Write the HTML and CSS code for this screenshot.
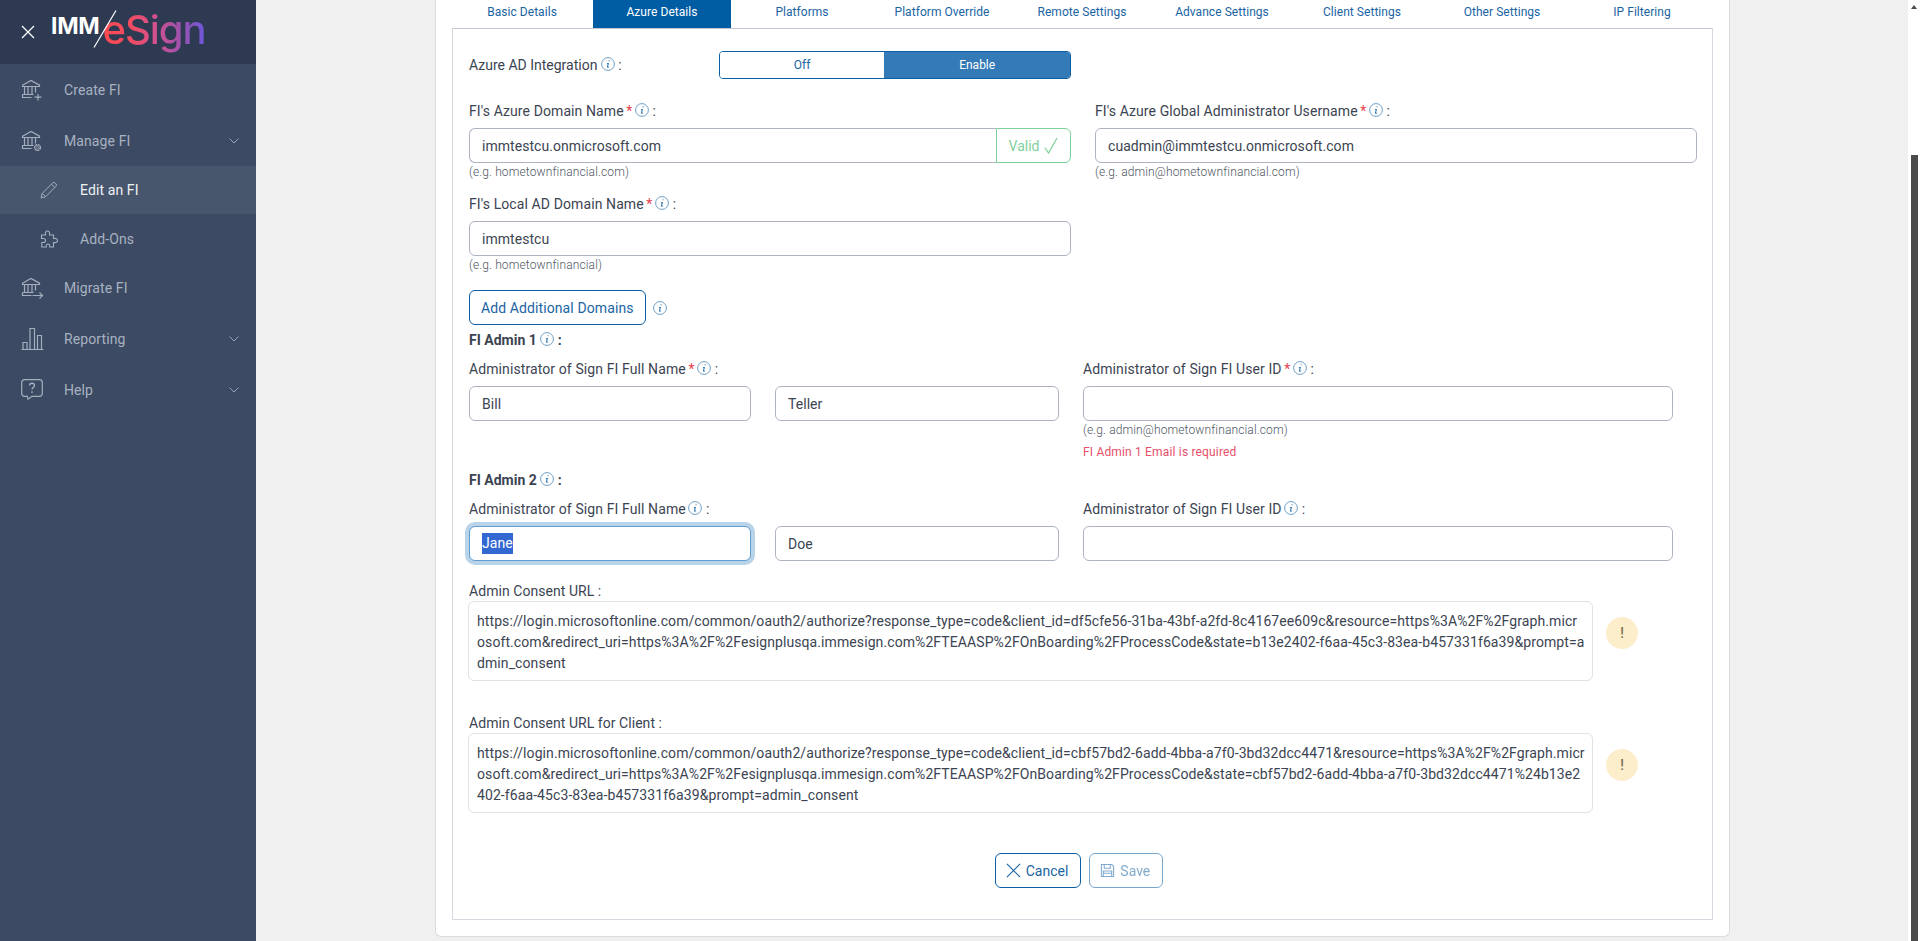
FILE: index.html
```html
<!DOCTYPE html>
<html>
<head>
  <meta charset="UTF-8">
  <title>IMM eSign - Edit an FI</title>
  <link rel="stylesheet" href="styles.css">
</head>
<body>
  <svg class="sprite" aria-hidden="true">
    <symbol id="info" viewBox="0 0 14 14">
      <circle cx="7" cy="7" r="6.4" fill="none" stroke="#6f9fc6" stroke-width="1"></circle>
      <path d="M7.6 3.2h.9v1h-.9zM6 6.1h1.9l-.8 3.6h1v.7H5.9l.8-3.6h-.9z" fill="#1f6aa5"></path>
    </symbol>
    <symbol id="bank" viewBox="0 0 22 22">
      <path d="M1.5 6.2L10 1.5l8.5 4.7v1.3h-17zM3.5 7.5v7.5M7 7.5v7.5M11 7.5v7.5M14.5 7.5v6M1.5 15.5h11M1.5 15.5v3h9" fill="none" stroke="currentColor" stroke-width="1.2"></path>
    </symbol>
    <symbol id="chev" viewBox="0 0 10 6">
      <path d="M.5 .5L5 5l4.5-4.5" fill="none" stroke="currentColor" stroke-width="1"></path>
    </symbol>
  </svg>

  <aside class="sidebar">
    <div class="side-header">
      <svg class="close-icon" viewBox="0 0 14 14"><path d="M1 1l12 12M13 1L1 13" stroke="#fff" stroke-width="1.3"></path></svg>
      <div class="logo">
        <span class="logo-imm">IMM</span>
        <span class="logo-sign">eSign</span>
        <svg class="logo-slash" viewBox="0 0 24 38"><path d="M23 .5L1 37.5" stroke="#fff" stroke-width="1.2"></path></svg>
      </div>
    </div>
    <nav>
      <a class="nav-item">
        <svg class="nav-icon"><use href="#bank"></use><path d="M17 15v6.5M13.5 18.2h7" fill="none" stroke="currentColor" stroke-width="1.2"></path></svg>
        <span>Create FI</span>
      </a>
      <a class="nav-item">
        <svg class="nav-icon"><use href="#bank"></use><circle cx="16.5" cy="17.5" r="2.8" fill="none" stroke="currentColor" stroke-width="1.6" stroke-dasharray="2 .6"></circle><circle cx="16.5" cy="17.5" r="1.2" fill="none" stroke="currentColor" stroke-width=".7"></circle></svg>
        <span>Manage FI</span>
        <svg class="chev"><use href="#chev"></use></svg>
      </a>
      <a class="nav-item sub active">
        <svg class="nav-icon" viewBox="0 0 18 18"><path d="M1 17l1.2-4.6L12.6 2a1.6 1.6 0 0 1 2.4 0l.9.9a1.6 1.6 0 0 1 0 2.4L5.6 15.8zM2.2 12.4l3.4 3.4M11.4 3.2l3.4 3.4" fill="none" stroke="currentColor" stroke-width="1"></path></svg>
        <span>Edit an FI</span>
      </a>
      <a class="nav-item sub">
        <svg class="nav-icon" viewBox="0 0 18 18"><path d="M1.5 5h4C5 2.500 6 1 7.500 1S10 2.500 9.500 5h4v3.500c2.500-.5 4 .3 4 2s-1.500 2.500-4 2V17h-3.800c.4-2-.4-3-1.700-3s-2.100 1-1.700 3H1.800v-4.500H3.500c1.500 0 2-.8 2-2s-.7-2-2-2H1.500z" fill="none" stroke="currentColor" stroke-width="1.100"></path></svg>
        <span>Add-Ons</span>
      </a>
      <a class="nav-item">
        <svg class="nav-icon"><use href="#bank"></use><path d="M11.500 18.500h10M18.500 15.500l3 3-3 3" fill="none" stroke="currentColor" stroke-width="1.200"></path></svg>
        <span>Migrate FI</span>
      </a>
      <a class="nav-item">
        <svg class="nav-icon" viewBox="0 0 22 22"><path d="M.5 21.500h22M2 21.500v-7h4v7M9 21.500V.5h4.500v21M16.500 21.500V7.500h4v14" fill="none" stroke="currentColor" stroke-width="1.200"></path></svg>
        <span>Reporting</span>
        <svg class="chev"><use href="#chev"></use></svg>
      </a>
      <a class="nav-item">
        <svg class="nav-icon" viewBox="0 0 22 22"><path d="M3.500 .7h15a2.800 2.800 0 0 1 2.800 2.800v11a2.800 2.800 0 0 1-2.800 2.800h-7.500l-4 3-.6-3H3.500A2.800 2.800 0 0 1 .7 14.500v-11A2.800 2.800 0 0 1 3.500 .7z" fill="none" stroke="currentColor" stroke-width="1.200"></path><path d="M8.500 6.500c0-3 5-3 5 0 0 2-2.500 1.800-2.500 4M11 12.300v1.700" fill="none" stroke="currentColor" stroke-width="1.300"></path></svg>
        <span>Help</span>
        <svg class="chev"><use href="#chev"></use></svg>
      </a>
    </nav>
  </aside>

  <main class="content">
    <div class="card">
      <div class="tabs">
        <a class="tab">Basic Details</a>
        <a class="tab active">Azure Details</a>
        <a class="tab">Platforms</a>
        <a class="tab">Platform Override</a>
        <a class="tab">Remote Settings</a>
        <a class="tab">Advance Settings</a>
        <a class="tab">Client Settings</a>
        <a class="tab">Other Settings</a>
        <a class="tab">IP Filtering</a>
      </div>

      <div class="pane">
        <div class="toggle-row">
          <div class="toggle-label">Azure AD Integration <svg class="info"><use href="#info"></use></svg> :</div>
          <div class="toggle">
            <button class="toggle-btn">Off</button>
            <button class="toggle-btn on">Enable</button>
          </div>
        </div>

        <div class="two-col">
          <div class="col">
            <label class="field-label">FI's Azure Domain Name <span class="req">*</span> <svg class="info"><use href="#info"></use></svg> :</label>
            <div class="input-group">
              <input class="input" type="text" value="immtestcu.onmicrosoft.com">
              <div class="valid">Valid
                <svg class="check" viewBox="0 0 14 18"><path d="M1 10.500l3.500 5.500L13 1" fill="none" stroke="#7fd19b" stroke-width="1.200"></path></svg>
              </div>
            </div>
            <div class="hint">(e.g. hometownfinancial.com)</div>
          </div>
          <div class="col">
            <label class="field-label">FI's Azure Global Administrator Username <span class="req">*</span> <svg class="info"><use href="#info"></use></svg> :</label>
            <input class="input" type="text" value="cuadmin@immtestcu.onmicrosoft.com">
            <div class="hint">(e.g. admin@hometownfinancial.com)</div>
          </div>
        </div>

        <div class="two-col local-row">
          <div class="col">
            <label class="field-label">FI's Local AD Domain Name <span class="req">*</span> <svg class="info"><use href="#info"></use></svg> :</label>
            <input class="input" type="text" value="immtestcu">
            <div class="hint">(e.g. hometownfinancial)</div>
          </div>
        </div>

        <div class="domains-row">
          <button class="btn-outline">Add Additional Domains</button>
          <svg class="info"><use href="#info"></use></svg>
        </div>

        <div class="admin-title first">FI Admin 1 <svg class="info"><use href="#info"></use></svg> :</div>
        <div class="admin-grid">
          <label class="field-label name-label">Administrator of Sign FI Full Name <span class="req">*</span> <svg class="info"><use href="#info"></use></svg> :</label>
          <label class="field-label">Administrator of Sign FI User ID <span class="req">*</span> <svg class="info"><use href="#info"></use></svg> :</label>
          <input class="input" type="text" value="Bill">
          <input class="input" type="text" value="Teller">
          <div>
            <input class="input" type="text">
            <div class="hint">(e.g. admin@hometownfinancial.com)</div>
            <div class="error">FI Admin 1 Email is required</div>
          </div>
        </div>

        <div class="admin-title">FI Admin 2 <svg class="info"><use href="#info"></use></svg> :</div>
        <div class="admin-grid">
          <label class="field-label name-label">Administrator of Sign FI Full Name <svg class="info"><use href="#info"></use></svg> :</label>
          <label class="field-label">Administrator of Sign FI User ID <svg class="info"><use href="#info"></use></svg> :</label>
          <div class="input focused"><span class="selected">Jane</span></div>
          <input class="input" type="text" value="Doe">
          <input class="input" type="text">
        </div>

        <div class="url-label first">Admin Consent URL :</div>
        <div class="url-row">
          <div class="url-box">https://login.microsoftonline.com/common/oauth2/authorize?response_type=code&amp;client_id=df5cfe56-31ba-43bf-a2fd-8c4167ee609c&amp;resource=https%3A%2F%2Fgraph.microsoft.com&amp;redirect_uri=https%3A%2F%2Fesignplusqa.immesign.com%2FTEAASP%2FOnBoarding%2FProcessCode&amp;state=b13e2402-f6aa-45c3-83ea-b457331f6a39&amp;prompt=admin_consent</div>
          <div class="warn">!</div>
        </div>

        <div class="url-label">Admin Consent URL for Client :</div>
        <div class="url-row">
          <div class="url-box">https://login.microsoftonline.com/common/oauth2/authorize?response_type=code&amp;client_id=cbf57bd2-6add-4bba-a7f0-3bd32dcc4471&amp;resource=https%3A%2F%2Fgraph.microsoft.com&amp;redirect_uri=https%3A%2F%2Fesignplusqa.immesign.com%2FTEAASP%2FOnBoarding%2FProcessCode&amp;state=cbf57bd2-6add-4bba-a7f0-3bd32dcc4471%24b13e2402-f6aa-45c3-83ea-b457331f6a39&amp;prompt=admin_consent</div>
          <div class="warn">!</div>
        </div>

        <div class="actions">
          <button class="btn-outline with-icon">
            <svg class="btn-icon" viewBox="0 0 16 16"><path d="M1 1l14 14M15 1L1 15" stroke="currentColor" stroke-width="1.200"></path></svg>
            Cancel
          </button>
          <button class="btn-outline with-icon disabled">
            <svg class="btn-icon" viewBox="0 0 16 16"><path d="M1.500 1.500h11l2 2v11h-13zM4.500 1.500v4h6.500v-4M3.500 14.500v-6h9v6M3.500 11h9" fill="none" stroke="currentColor" stroke-width="1.100"></path></svg>
            Save
          </button>
        </div>
      </div>
    </div>
  </main>

  <div class="scrollbar">
    <div class="scroll-up"></div>
    <div class="scroll-thumb"></div>
  </div>
</body>
</html>
```

FILE: styles.css
```css
* {
  margin: 0;
  padding: 0;
  box-sizing: border-box;
}

html, body {
  height: 100vh;
  overflow: hidden;
}

body {
  display: flex;
  font-family: Roboto, sans-serif;
  font-size: 14px;
  color: #3c4452;
  background: #f0f0f0;
}

.sprite {
  display: none;
}

/* sidebar */
.sidebar {
  width: 256px;
  flex-shrink: 0;
  background: #3c4a63;
}

.side-header {
  height: 64px;
  background: #2e3a52;
  display: flex;
  align-items: center;
  padding-left: 21px;
  gap: 16px;
}

.close-icon {
  width: 14px;
  height: 14px;
}

.logo {
  position: relative;
  display: flex;
  align-items: flex-start;
  height: 64px;
}

.logo-imm {
  font-family: Inter, sans-serif;
  font-weight: 700;
  font-size: 23px;
  line-height: 28px;
  color: #fff;
  margin-top: 12px;
  letter-spacing: -0.3px;
}

.logo-sign {
  font-family: Inter, sans-serif;
  font-weight: 500;
  font-size: 40px;
  line-height: 50px;
  letter-spacing: -1px;
  margin-top: 5px;
  margin-left: 3px;
  background: linear-gradient(90deg, #ff4a50 0%, #f04c62 28%, #d9518a 48%, #a552a8 72%, #6c56dc 100%);
  -webkit-background-clip: text;
  background-clip: text;
  color: transparent;
}

.logo-slash {
  position: absolute;
  left: 42px;
  top: 10px;
  width: 24px;
  height: 38px;
}

.nav-item {
  display: flex;
  align-items: center;
  height: 51px;
  padding-left: 21px;
  color: #a8b2c1;
  letter-spacing: 0.1px;
}

.nav-item span {
  margin-left: 21px;
}

.nav-icon {
  width: 22px;
  height: 22px;
  flex-shrink: 0;
  color: #a4aebd;
  overflow: visible;
}

.nav-item.sub {
  height: 48px;
  padding-left: 40px;
}

.nav-item.sub + .nav-item.sub {
  padding-top: 2px;
}

.nav-item.sub .nav-icon {
  width: 18px;
  height: 18px;
}

.nav-item.sub span {
  margin-left: 22px;
}

.nav-item.active {
  background: #47566d;
  color: #eef1f5;
}

.chev {
  width: 10px;
  height: 6px;
  margin-left: auto;
  margin-right: 17px;
  color: #98a3b3;
}

/* main */
.content {
  flex: 1;
  min-width: 0;
  padding-left: 179px;
  padding-right: 178px;
}

.card {
  height: 937px;
  background: #fff;
  border: 1px solid #dcdcdc;
  border-top: none;
  border-radius: 0 0 6px 6px;
  padding: 0 16px;
}

.tabs {
  display: flex;
  height: 28px;
}

.tab {
  width: 140px;
  line-height: 24px;
  text-align: center;
  font-size: 12px;
  letter-spacing: 0.05px;
  color: #1a64a4;
}

.tab.active {
  margin: 0 1px;
  width: 138px;
  background: #005ca3;
  color: #fff;
}

.pane {
  height: 892px;
  border: 1px solid #d6d9df;
  border-top-color: #c3c8d2;
  padding: 22px 16px 0;
}

.toggle-row {
  display: flex;
  align-items: center;
  height: 28px;
}

.toggle-label {
  width: 250px;
}

.info {
  width: 14px;
  height: 14px;
  vertical-align: -1px;
}

.toggle {
  display: flex;
  width: 352px;
  height: 28px;
  border: 1px solid #0b5fa5;
  border-radius: 4px;
  overflow: hidden;
}

.toggle-btn {
  flex: 1;
  border: none;
  background: #fff;
  color: #1a64a4;
  font-family: inherit;
  font-size: 12px;
}

.toggle-btn.on {
  flex: 1.13;
  background: #337ab7;
  color: #fff;
}

.two-col {
  display: grid;
  grid-template-columns: 602px 602px;
  gap: 24px;
  margin-top: 22px;
}

.two-col.local-row {
  margin-top: 13px;
}

.field-label {
  display: block;
  height: 20px;
  line-height: 20px;
  margin-bottom: 7px;
  letter-spacing: 0.1px;
}

.field-label .info {
  margin-left: -1px;
}

.req {
  margin-left: -1px;
  color: #e5434f;
}

.input {
  display: block;
  width: 100%;
  height: 35px;
  border: 1px solid #adb3c1;
  border-radius: 6px;
  padding: 0 12px;
  font-family: inherit;
  font-size: 14px;
  letter-spacing: 0.05px;
  line-height: 33px;
  color: #3c4452;
  background: #fff;
  outline: none;
}

.input.focused {
  border-color: #5f9ccf;
  box-shadow: 0 0 0 4px #b9d3e9;
}

.selected {
  display: inline-block;
  height: 21px;
  line-height: 21px;
  background: #3367d1;
  color: #fff;
  vertical-align: middle;
  margin-top: -2px;
}

.input-group {
  display: flex;
}

.input-group .input {
  flex: 1;
  min-width: 0;
  border-right: none;
  border-radius: 6px 0 0 6px;
}

.valid {
  width: 75px;
  height: 35px;
  flex-shrink: 0;
  display: flex;
  align-items: center;
  justify-content: center;
  gap: 5px;
  border: 1px solid #7fd19b;
  border-radius: 0 6px 6px 0;
  color: #7fd19b;
}

.check {
  width: 14px;
  height: 18px;
}

.hint {
  height: 18px;
  line-height: 18px;
  font-size: 12px;
  font-weight: 300;
  letter-spacing: 0.13px;
  color: #4f5763;
}

.domains-row {
  display: flex;
  align-items: center;
  gap: 7px;
  margin-top: 16px;
}

.btn-outline {
  height: 35px;
  padding: 0 11px;
  border: 1px solid #0b5fa5;
  border-radius: 6px;
  background: #fff;
  color: #1a64a4;
  font-family: inherit;
  font-size: 14px;
  letter-spacing: 0.1px;
}

.admin-title {
  height: 20px;
  line-height: 20px;
  font-weight: 700;
  margin-top: 9px;
}

.admin-title.first {
  margin-top: 5px;
}

.admin-grid {
  display: grid;
  grid-template-columns: 282px 284px 590px;
  column-gap: 24px;
  margin-top: 9px;
}

.name-label {
  grid-column: span 2;
}

.error {
  height: 18px;
  line-height: 18px;
  margin-top: 4px;
  font-size: 12px;
  letter-spacing: 0.17px;
  color: #e5506a;
}

.url-label {
  height: 20px;
  line-height: 20px;
  margin-top: 32px;
  letter-spacing: 0.05px;
}

.url-label.first {
  margin-top: 20px;
}

.url-row {
  display: flex;
  align-items: center;
  gap: 13px;
}

.url-box {
  width: 1125px;
  height: 80px;
  margin-left: -1px;
  border: 1px solid #e2e2e2;
  border-radius: 6px;
  padding: 9px 7px 0 8px;
  line-height: 21px;
  letter-spacing: 0.09px;
  word-break: break-all;
}

.warn {
  width: 32px;
  height: 32px;
  margin-bottom: 17px;
  border-radius: 50%;
  background: #fdeecb;
  color: #7d7256;
  text-align: center;
  line-height: 32px;
  font-weight: 500;
}

.actions {
  display: flex;
  justify-content: center;
  gap: 8px;
  margin-top: 40px;
  padding-right: 7px;
}

.with-icon {
  display: flex;
  align-items: center;
  gap: 5px;
  padding: 0 12px 0 10px;
  letter-spacing: 0;
}

.btn-icon {
  width: 15px;
  height: 15px;
}

.disabled {
  opacity: 0.55;
}

/* fake page scrollbar */
.scrollbar {
  width: 12px;
  flex-shrink: 0;
  background: #fff;
  display: flex;
  flex-direction: column;
}

.scroll-up {
  width: 0;
  height: 0;
  margin: 5px 0 0 3px;
  border-left: 3px solid transparent;
  border-right: 3px solid transparent;
  border-bottom: 4px solid #4b4b4b;
}

.scroll-thumb {
  flex: 1;
  margin: 146px 2px 0 3px;
  background: #4b4b4b;
}
```
